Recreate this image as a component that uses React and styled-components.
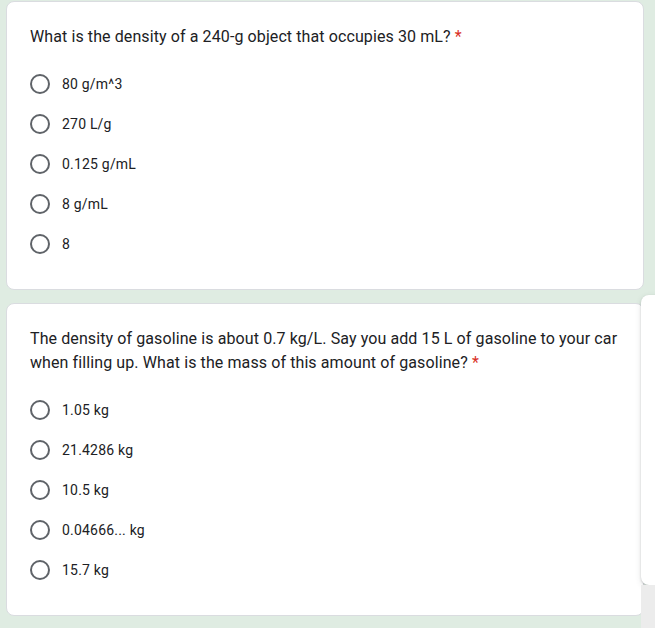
import styled, { createGlobalStyle } from "styled-components";

const GlobalStyle = createGlobalStyle`
  html, body {
    margin: 0;
    padding: 0;
    background: #dfece2;
    font-family: Roboto, "Noto Sans", Arial, sans-serif;
  }
`;

const Page = styled.div`
  position: relative;
  width: 655px;
  height: 628px;
  overflow: hidden;
  box-sizing: border-box;
  padding: 1px 11px 0 6px;
  display: flex;
  flex-direction: column;
  gap: 13px;
`;

const Card = styled.div`
  background: #fff;
  border: 1px solid #dadce0;
  border-radius: 8px;
  padding: 23px 23px 25px;
  display: flex;
  flex-direction: column;
  gap: 15px;
`;

const Question = styled.div`
  font-size: 16px;
  line-height: 24px;
  color: #202124;
  letter-spacing: 0.1px;
`;

const Required = styled.span`
  color: #d93025;
`;

const Options = styled.div`
  display: flex;
  flex-direction: column;
`;

const Option = styled.div`
  display: flex;
  align-items: center;
  height: 40px;
  gap: 12px;
  font-size: 14px;
  color: #202124;
  letter-spacing: 0.2px;
`;

const Radio = styled.span`
  width: 20px;
  height: 20px;
  box-sizing: border-box;
  border: 2px solid #5f6368;
  border-radius: 50%;
  flex-shrink: 0;
`;

const SidePanel = styled.div`
  position: absolute;
  left: 641px;
  top: 295px;
  width: 20px;
  height: 290px;
  background: #fff;
  border-radius: 8px 0 0 8px;
  box-shadow: 0 1px 2px rgba(60, 64, 67, 0.25), 0 2px 6px rgba(60, 64, 67, 0.12);
`;

const SideGrey = styled.div`
  position: absolute;
  left: 641px;
  top: 585px;
  width: 20px;
  height: 50px;
  background: #ececec;
`;

const questions = [
  {
    text: "What is the density of a 240-g object that occupies 30 mL?",
    options: ["80 g/m^3", "270 L/g", "0.125 g/mL", "8 g/mL", "8"],
  },
  {
    text: "The density of gasoline is about 0.7 kg/L. Say you add 15 L of gasoline to your car when filling up. What is the mass of this amount of gasoline?",
    options: ["1.05 kg", "21.4286 kg", "10.5 kg", "0.04666... kg", "15.7 kg"],
  },
];

export default function App() {
  return (
    <>
      <GlobalStyle />
      <Page>
        {questions.map((q) => (
          <Card key={q.text}>
            <Question>
              {q.text} <Required>*</Required>
            </Question>
            <Options>
              {q.options.map((o) => (
                <Option key={o}>
                  <Radio />
                  {o}
                </Option>
              ))}
            </Options>
          </Card>
        ))}
        <SidePanel />
        <SideGrey />
      </Page>
    </>
  );
}
